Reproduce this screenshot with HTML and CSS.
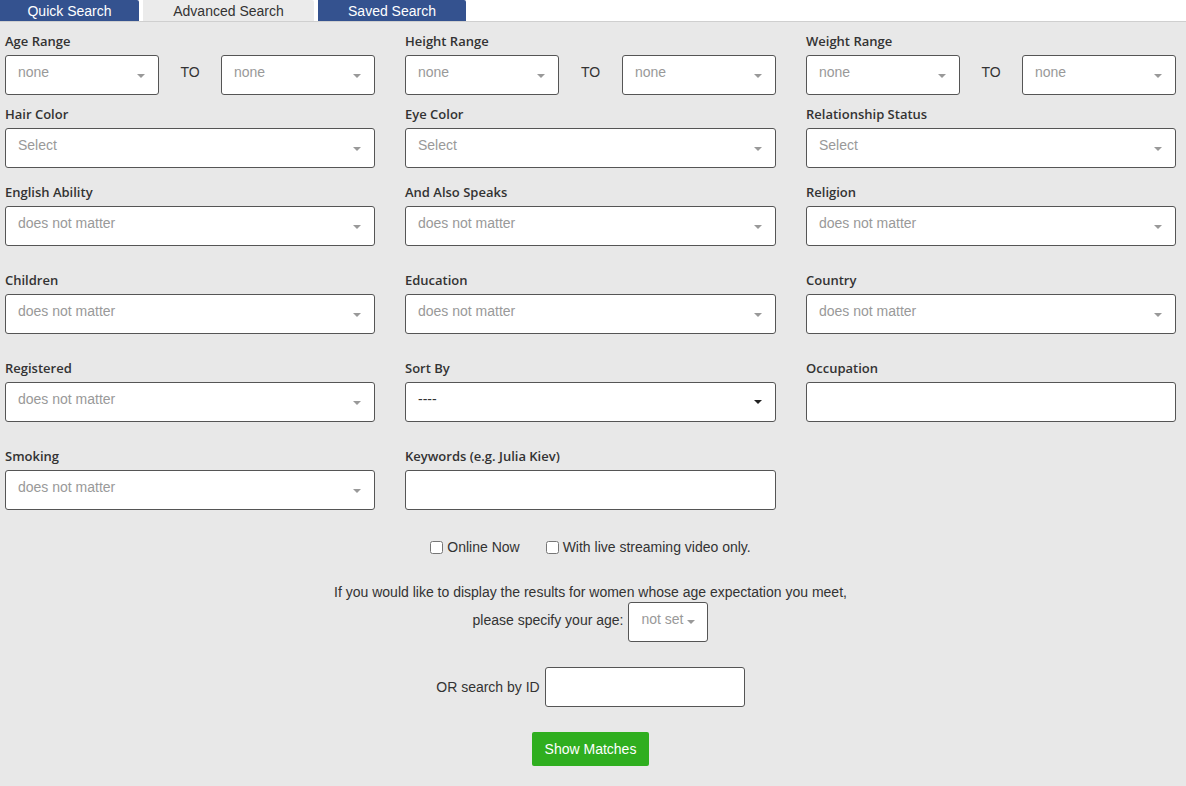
FILE: index.html
```html
<!DOCTYPE html>
<html lang="en">
<head>
  <meta charset="UTF-8" />
  <meta name="viewport" content="width=device-width, initial-scale=1.0"/>
  <title>Advanced Search</title>
  <link rel="stylesheet" href="styles.css">
</head>
<body>
  <div class="tabs">
    <a class="tab tab-quick" href="#">Quick Search</a>
    <a class="tab tab-advanced active" href="#">Advanced Search</a>
    <a class="tab tab-saved" href="#">Saved Search</a>
  </div>

  <form class="search">
    <div class="row row-first">
      <div class="field">
        <label>Age Range</label>
        <div class="range">
          <div class="select-wrap"><select><option>none</option></select></div>
          <span class="to">TO</span>
          <div class="select-wrap"><select><option>none</option></select></div>
        </div>
      </div>
      <div class="field">
        <label>Height Range</label>
        <div class="range">
          <div class="select-wrap"><select><option>none</option></select></div>
          <span class="to">TO</span>
          <div class="select-wrap"><select><option>none</option></select></div>
        </div>
      </div>
      <div class="field">
        <label>Weight Range</label>
        <div class="range">
          <div class="select-wrap"><select><option>none</option></select></div>
          <span class="to">TO</span>
          <div class="select-wrap"><select><option>none</option></select></div>
        </div>
      </div>
    </div>

    <div class="row row-second">
      <div class="field">
        <label>Hair Color</label>
        <div class="select-wrap"><select><option>Select</option></select></div>
      </div>
      <div class="field">
        <label>Eye Color</label>
        <div class="select-wrap"><select><option>Select</option></select></div>
      </div>
      <div class="field">
        <label>Relationship Status</label>
        <div class="select-wrap"><select><option>Select</option></select></div>
      </div>
    </div>

    <div class="row">
      <div class="field">
        <label>English Ability</label>
        <div class="select-wrap"><select><option>does not matter</option></select></div>
      </div>
      <div class="field">
        <label>And Also Speaks</label>
        <div class="select-wrap"><select><option>does not matter</option></select></div>
      </div>
      <div class="field">
        <label>Religion</label>
        <div class="select-wrap"><select><option>does not matter</option></select></div>
      </div>
    </div>

    <div class="row">
      <div class="field">
        <label>Children</label>
        <div class="select-wrap"><select><option>does not matter</option></select></div>
      </div>
      <div class="field">
        <label>Education</label>
        <div class="select-wrap"><select><option>does not matter</option></select></div>
      </div>
      <div class="field">
        <label>Country</label>
        <div class="select-wrap"><select><option>does not matter</option></select></div>
      </div>
    </div>

    <div class="row">
      <div class="field">
        <label>Registered</label>
        <div class="select-wrap"><select><option>does not matter</option></select></div>
      </div>
      <div class="field">
        <label>Sort By</label>
        <div class="select-wrap dark"><select class="filled"><option>----</option></select></div>
      </div>
      <div class="field">
        <label>Occupation</label>
        <input type="text" class="text-input" />
      </div>
    </div>

    <div class="row">
      <div class="field">
        <label>Smoking</label>
        <div class="select-wrap"><select><option>does not matter</option></select></div>
      </div>
      <div class="field">
        <label>Keywords (e.g. Julia Kiev)</label>
        <input type="text" class="text-input" />
      </div>
    </div>

    <div class="checks">
      <label class="check"><input type="checkbox" /> Online Now</label>
      <label class="check"><input type="checkbox" /> With live streaming video only.</label>
    </div>

    <div class="age-note">
      <p>If you would like to display the results for women whose age expectation you meet,</p>
      <div class="age-line">
        <span>please specify your age:</span>
        <div class="select-wrap small"><select><option>not set</option></select></div>
      </div>
    </div>

    <div class="by-id">
      <span>OR search by ID</span>
      <input type="text" class="id-input" />
    </div>

    <div class="actions">
      <button type="button" class="show">Show Matches</button>
    </div>
  </form>
</body>
</html>
```

FILE: styles.css
```css
body {
  margin: 0;
  background: #e8e8e8;
  color: #333;
  font-family: "Liberation Sans", Arial, sans-serif;
  font-size: 14px;
}
.tabs {
  display: flex;
  height: 21px;
  background: #fff;
  border-bottom: 1px solid #cfcfcf;
}
.tab {
  display: block;
  margin-right: 4px;
  height: 21px;
  line-height: 22px;
  text-align: center;
  text-decoration: none;
  color: #fff;
  background: #34528f;
  border-top-right-radius: 2px;
}
.tab-quick {
  width: 139px;
}
.tab-advanced {
  width: 171px;
  color: #333;
  background: #ebebeb;
}
.tab-saved {
  width: 148px;
}
.search {
  padding: 10px 0 0 5px;
  width: 1171px;
}
.row {
  display: grid;
  grid-template-columns: 370px 371px 370px;
  column-gap: 30px;
  margin-bottom: 25px;
}
.row-first {
  margin-bottom: 10px;
}
.row-second {
  margin-bottom: 15px;
}
.field label {
  display: block;
  font-family: "Open Sans", sans-serif;
  font-weight: 600;
  font-size: 13px;
  line-height: 18px;
  margin-bottom: 5px;
  color: #333;
}
.range {
  display: flex;
  align-items: flex-start;
}
.range .select-wrap {
  width: 154px;
}
.to {
  flex: 1;
  text-align: center;
  line-height: 34px;
}
.select-wrap {
  position: relative;
}
.select-wrap::after {
  content: "";
  position: absolute;
  right: 14px;
  top: 19px;
  border-left: 4px solid transparent;
  border-right: 4px solid transparent;
  border-top: 4px solid #999;
  pointer-events: none;
}
.select-wrap.dark::after {
  border-top-color: #222;
  top: 18px;
}
select {
  -webkit-appearance: none;
  appearance: none;
  display: block;
  width: 100%;
  height: 40px;
  box-sizing: border-box;
  padding: 0 30px 6px 12px;
  border: 1px solid #555;
  border-radius: 3px;
  background: #fff;
  color: #999;
  font-family: "Liberation Sans", Arial, sans-serif;
  font-size: 14px;
}
select.filled {
  color: #333;
}
.text-input {
  display: block;
  width: 100%;
  height: 40px;
  box-sizing: border-box;
  border: 1px solid #555;
  border-radius: 3px;
  background: #fff;
}
.checks {
  display: flex;
  justify-content: center;
  gap: 26px;
  margin-top: 27px;
  line-height: 20px;
}
.check {
  display: flex;
  align-items: center;
}
.check input {
  width: 13px;
  height: 13px;
  margin: 0 4px 0 0;
}
.age-note {
  margin-top: 25px;
  text-align: center;
}
.age-note p {
  margin: 0;
  line-height: 20px;
}
.age-line {
  display: flex;
  justify-content: center;
  align-items: center;
  gap: 5px;
}
.age-line span {
  margin-top: -4px;
}
.select-wrap.small {
  width: 80px;
}
.select-wrap.small select {
  padding: 0 20px 6px 12px;
}
.select-wrap.small::after {
  right: 13px;
  top: 18px;
}
.by-id {
  display: flex;
  justify-content: center;
  align-items: center;
  gap: 5px;
  margin-top: 25px;
}
.id-input {
  width: 200px;
  height: 40px;
  box-sizing: border-box;
  border: 1px solid #555;
  border-radius: 3px;
  background: #fff;
}
.actions {
  margin-top: 25px;
  text-align: center;
}
.show {
  height: 34px;
  padding: 0 13px;
  border: none;
  border-radius: 2px;
  background: #2fae1f;
  color: #fff;
  font-family: "Liberation Sans", Arial, sans-serif;
  font-size: 14px;
  cursor: pointer;
}
```
